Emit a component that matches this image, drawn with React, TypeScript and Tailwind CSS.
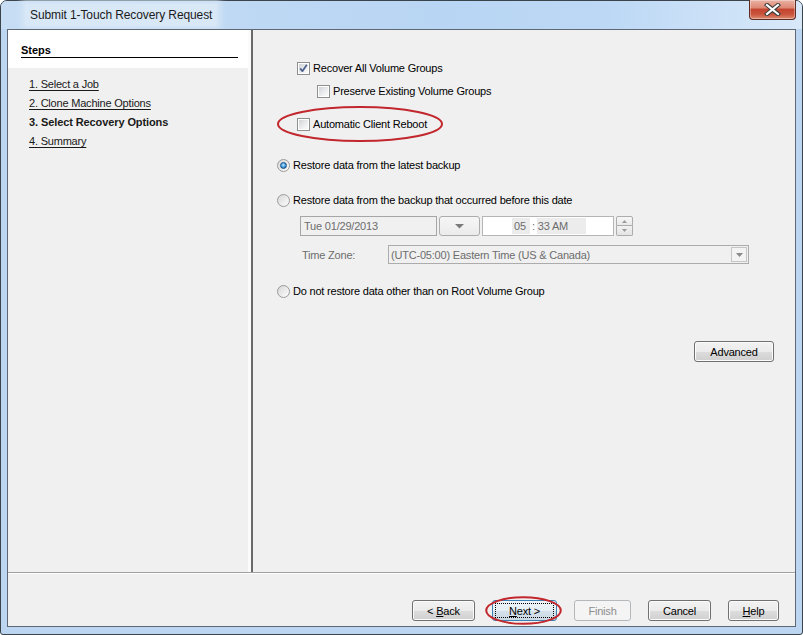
import React from "react";

function Checkbox({ checked }: { checked?: boolean }) {
  return (
    <span className="relative block w-[13px] h-[13px] shrink-0 border border-[#8e8f8f] bg-white">
      <span className="absolute inset-[1px] bg-[linear-gradient(135deg,#cfd2d6_0%,#e9eaec_50%,#fbfbfb_100%)]" />
      {checked && (
        <svg className="absolute left-0 top-0" width="11" height="11" viewBox="0 0 11 11">
          <path d="M2.2 5.4 L4.4 8.2 L8.8 1.8" fill="none" stroke="#4b5f8c" strokeWidth="1.7" strokeLinejoin="round" />
        </svg>
      )}
    </span>
  );
}

function Radio({ checked }: { checked?: boolean }) {
  return (
    <span className="relative flex items-center justify-center w-[13px] h-[13px] shrink-0 rounded-full border border-[#9a9a9a] bg-[linear-gradient(135deg,#d6d8db_0%,#ececec_55%,#fdfdfd_100%)]">
      {checked && (
        <span className="block w-[7px] h-[7px] rounded-full border border-[#1b4f84] bg-[radial-gradient(circle_at_45%_40%,#c9ecff_0%,#4ea3e0_45%,#155a9a_100%)]" />
      )}
    </span>
  );
}

function Btn({
  children,
  className,
}: {
  children: React.ReactNode;
  className: string;
}) {
  return (
    <div
      className={`h-[21px] rounded-[3px] border border-[#707070] shadow-[inset_0_0_0_1px_#fbfbfb] bg-[linear-gradient(#f2f2f2_0%,#ebebeb_50%,#dddddd_51%,#cfcfcf_100%)] flex items-center justify-center text-[11px] text-black ${className}`}
    >
      <span className="whitespace-pre">{children}</span>
    </div>
  );
}

function DownTri({ color = "#6f6f6f" }: { color?: string }) {
  return (
    <svg width="9" height="5" viewBox="0 0 9 5">
      <path d="M0 0 H9 L4.5 4.5 Z" fill={color} />
    </svg>
  );
}

export default function App() {
  return (
    <div className="w-[803px] h-[635px] bg-white font-['Liberation_Sans',Arial,sans-serif] text-[11px] leading-[14px] tracking-[-0.2px] text-black">
      <div className="w-[803px] h-[635px] rounded-t-[7px] rounded-b-[3px] border border-[#3b434b] bg-[#bcd6f1] flex flex-col">
        {/* Title bar */}
        <div className="h-[28px] shrink-0 flex items-start rounded-t-[6px] bg-[linear-gradient(90deg,#c6ddf4_0%,#b8d5f3_55%,#bcd8f5_75%,#d8e8f9_100%)]">
          <div className="ml-[24px] mt-[3px] h-[22px] px-[5px] flex items-center bg-[#d8e8f7] shadow-[0_0_6px_4px_#d5e6f6] text-[12px] tracking-[-0.1px] text-[#1b1b1b]">
            Submit 1-Touch Recovery Request
          </div>
          <div className="ml-auto mr-[6px] -mt-px w-[47px] h-[20px] rounded-b-[4px] border border-[#5b2b24] border-t-0 bg-[linear-gradient(#eab1a3_0%,#dd8a76_40%,#c4452f_50%,#c9543b_75%,#df8c74_100%)] shadow-[inset_0_0_0_1px_rgba(255,255,255,0.35)] flex items-center justify-center">
            <svg width="17" height="13" viewBox="0 0 17 13">
              <path d="M3 2 L14 11 M14 2 L3 11" stroke="#3a3a3a" strokeWidth="4.2" strokeLinecap="square" />
              <path d="M3 2 L14 11 M14 2 L3 11" stroke="#ffffff" strokeWidth="2.2" strokeLinecap="square" />
            </svg>
          </div>
        </div>

        {/* Content */}
        <div className="mx-[6px] h-[598px] shrink-0 border border-[#5d6874] bg-[#f0f0f0] flex flex-col">
          <div className="h-[542px] flex">
            {/* Steps panel */}
            <div className="w-[240px] flex flex-col bg-[#f0f0f0]">
              <div className="h-[38px] bg-white pl-[13px] pr-[10px] pt-[13px]">
                <div className="font-bold leading-[14px] tracking-normal border-b border-black">Steps</div>
              </div>
              <div className="pl-[21px] pt-[7px] flex flex-col leading-[19px] text-[#1a1a1a]">
                <div><span className="underline underline-offset-[2px]">1. Select a Job</span></div>
                <div><span className="underline underline-offset-[2px]">2. Clone Machine Options</span></div>
                <div className="font-bold tracking-[-0.1px]">3. Select Recovery Options</div>
                <div><span className="underline underline-offset-[2px]">4. Summary</span></div>
              </div>
            </div>
            <div className="w-[3px] bg-[#fbfbfb]" />
            <div className="w-[2px] bg-[#6a6a6a]" />

            {/* Options panel */}
            <div className="flex-1 flex flex-col pl-[24px] pt-[30px]">
              <div className="ml-[20px] h-[16px] flex items-center gap-[3px]">
                <Checkbox checked />
                <span>Recover All Volume Groups</span>
              </div>
              <div className="ml-[40px] mt-[7px] h-[16px] flex items-center gap-[3px]">
                <Checkbox />
                <span>Preserve Existing Volume Groups</span>
              </div>
              <div className="relative ml-[20px] mt-[17px] h-[16px] flex items-center gap-[3px]">
                <Checkbox />
                <span>Automatic Client Reboot</span>
                <svg className="absolute left-[-20px] top-[-10px]" width="166" height="36" viewBox="0 0 166 36">
                  <ellipse cx="83" cy="18" rx="82" ry="17" fill="none" stroke="#c1272d" strokeWidth="2" />
                </svg>
              </div>
              <div className="mt-[25px] h-[16px] flex items-center gap-[3px]">
                <Radio checked />
                <span>Restore data from the latest backup</span>
              </div>
              <div className="mt-[19px] h-[16px] flex items-center gap-[3px]">
                <Radio />
                <span>Restore data from the backup that occurred before this date</span>
              </div>

              {/* Date / time row */}
              <div className="mt-[8px] ml-[23px] h-[20px] flex text-[#6d6d6d]">
                <div className="w-[137px] h-[20px] border border-[#a6a6a6] bg-[#f0f0f0] pl-[3px] flex items-center">
                  Tue 01/29/2013
                </div>
                <div className="ml-[2px] w-[41px] h-[20px] rounded-[3px] border border-[#acacac] bg-[linear-gradient(#f6f6f6,#ebebeb)] flex items-center justify-center">
                  <DownTri color="#7a7a7a" />
                </div>
                <div className="ml-[2px] w-[132px] h-[20px] border border-[#b5b5b5] bg-white flex items-center pl-[29px]">
                  <span className="bg-[#ececec] px-[2px] w-[18px] h-[16px] flex items-center">05</span>
                  <span className="px-[2px]">:</span>
                  <span className="bg-[#ececec] pl-[1px] w-[49px] h-[16px] flex items-center">33 AM</span>
                </div>
                <div className="ml-[2px] w-[17px] h-[20px] flex flex-col">
                  <div className="h-[10px] border border-[#acacac] rounded-t-[2px] bg-[linear-gradient(#f7f7f7,#e9e9e9)] flex items-center justify-center">
                    <svg width="5" height="3" viewBox="0 0 5 3"><path d="M0 3 H5 L2.5 0 Z" fill="#9a9a9a" /></svg>
                  </div>
                  <div className="h-[10px] border border-t-0 border-[#acacac] rounded-b-[2px] bg-[linear-gradient(#f2f2f2,#e3e3e3)] flex items-center justify-center">
                    <svg width="5" height="3" viewBox="0 0 5 3"><path d="M0 0 H5 L2.5 3 Z" fill="#9a9a9a" /></svg>
                  </div>
                </div>
              </div>

              {/* Time zone row */}
              <div className="mt-[9px] h-[19px] flex items-center text-[#6d6d6d]">
                <div className="ml-[25px] w-[86px]">Time Zone:</div>
                <div className="w-[361px] h-[19px] border border-[#acacac] bg-[#f0f0f0] flex items-center pl-[2px]">
                  <span className="flex-1">(UTC-05:00) Eastern Time (US &amp; Canada)</span>
                  <div className="mr-[1px] w-[16px] h-[15px] border border-[#c6c6c6] bg-[#f3f3f3] flex items-center justify-center">
                    <svg width="7" height="4" viewBox="0 0 7 4"><path d="M0 0 H7 L3.5 4 Z" fill="#8a8a8a" /></svg>
                  </div>
                </div>
              </div>

              <div className="mt-[19px] h-[16px] flex items-center gap-[3px]">
                <Radio />
                <span>Do not restore data other than on Root Volume Group</span>
              </div>

              <div className="mt-[42px] self-end mr-[21px]">
                <Btn className="w-[80px]">Advanced</Btn>
              </div>
            </div>
          </div>

          {/* Footer */}
          <div className="h-px bg-[#a0a0a0]" />
          <div className="h-px bg-white" />
          <div className="h-[52px] flex justify-end items-start pt-[26px] pr-[16px] gap-[17px]">
            <Btn className="w-[63px]">
              {"< "}<u>B</u>ack
            </Btn>
            <div className="relative">
              <div className="relative w-[65px] h-[21px] rounded-[3px] border border-[#3c7fb1] bg-[linear-gradient(#eef4f8_0%,#e5eef4_50%,#d6e2eb_51%,#cbd9e4_100%)] flex items-center justify-center">
                <div className="absolute inset-[2px] border border-dotted border-black" />
                <span className="whitespace-pre">
                  <u>N</u>{"ext >"}
                </span>
              </div>
              <svg className="absolute left-[-7px] top-[-4px]" width="77" height="29" viewBox="0 0 77 29">
                <ellipse cx="38.5" cy="14.5" rx="37.3" ry="13.3" fill="none" stroke="#c1272d" strokeWidth="2" />
              </svg>
            </div>
            <div className="w-[57px] h-[21px] rounded-[3px] border border-[#b4b8bb] bg-[#f4f4f4] text-[#8d8d8d] flex items-center justify-center">
              Finish
            </div>
            <Btn className="w-[63px]">Cancel</Btn>
            <Btn className="w-[51px]">
              <u>H</u>elp
            </Btn>
          </div>
        </div>
      </div>
    </div>
  );
}
